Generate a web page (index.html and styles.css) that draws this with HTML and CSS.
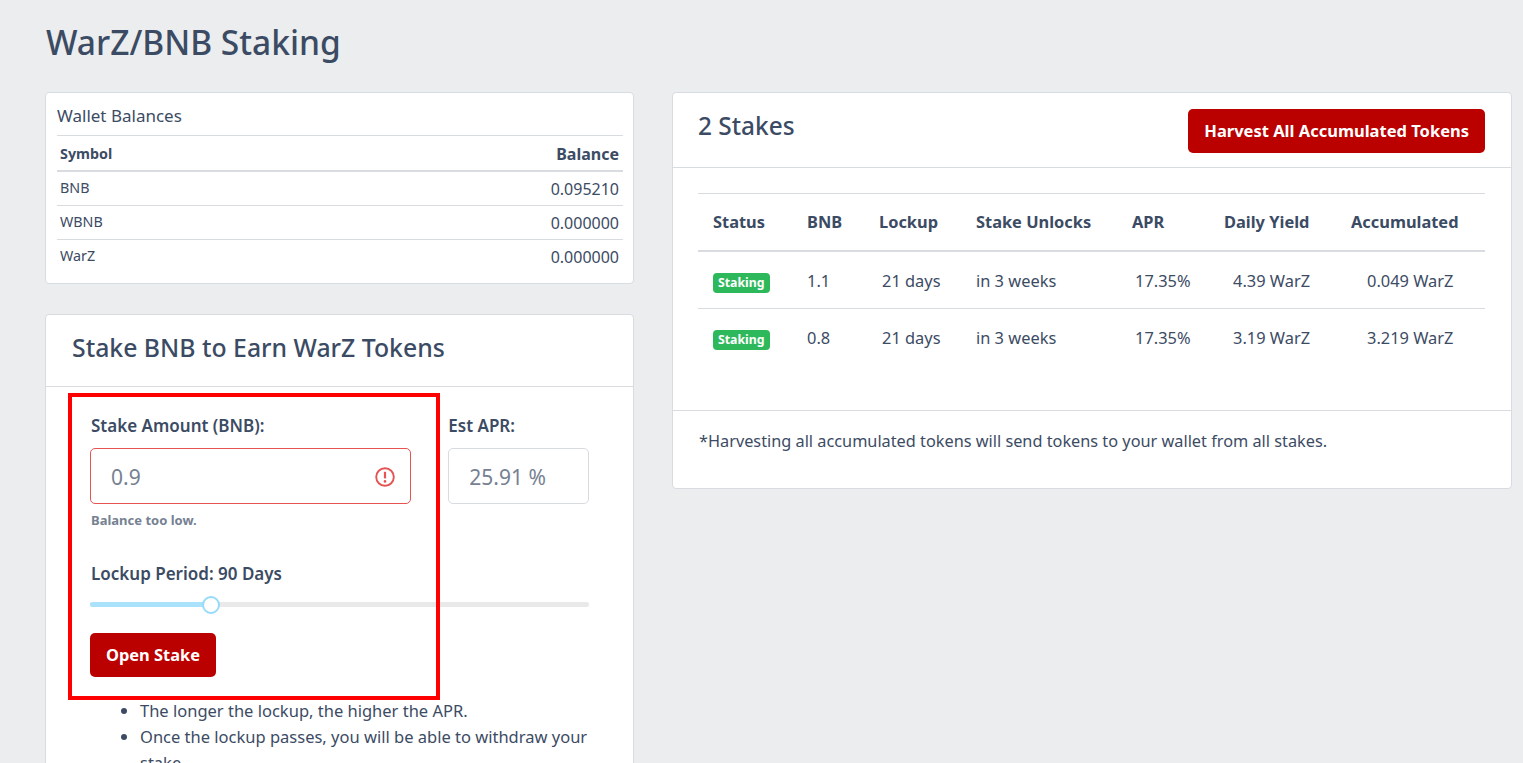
FILE: index.html
```html
<!DOCTYPE html>
<html>

<head>
    <meta charset="utf-8" />
    <title>WarZ/BNB Staking</title>
    <link rel="stylesheet" href="styles.css">
</head>

<body>
    <div class="page">
        <h1>WarZ/BNB Staking</h1>
        <div class="columns">
            <div class="left-col">
                <div class="card wallet">
                    <div class="wallet-title">Wallet Balances</div>
                    <table class="balances">
                        <thead>
                            <tr>
                                <th class="symbol">Symbol</th>
                                <th class="num">Balance</th>
                            </tr>
                        </thead>
                        <tbody>
                            <tr>
                                <td class="symbol">BNB</td>
                                <td class="num">0.095210</td>
                            </tr>
                            <tr>
                                <td class="symbol">WBNB</td>
                                <td class="num">0.000000</td>
                            </tr>
                            <tr>
                                <td class="symbol">WarZ</td>
                                <td class="num">0.000000</td>
                            </tr>
                        </tbody>
                    </table>
                </div>

                <div class="card stake-card">
                    <div class="stake-header">
                        <h2>Stake BNB to Earn WarZ Tokens</h2>
                    </div>
                    <div class="stake-body">
                        <div class="field-row">
                            <div class="field amount">
                                <label>Stake Amount (BNB):</label>
                                <div class="input invalid">
                                    <span>0.9</span>
                                    <svg width="20" height="20" viewBox="0 0 20 20" fill="none" stroke="#e55353">
                                        <circle cx="10" cy="10" r="8.8" stroke-width="1.9" />
                                        <path d="M10 4.8v6.6" stroke-width="2.2" />
                                        <circle cx="10" cy="14.4" r="1.3" fill="#e55353" stroke="none" />
                                    </svg>
                                </div>
                                <div class="hint">Balance too low.</div>
                            </div>
                            <div class="field apr">
                                <label>Est APR:</label>
                                <div class="input"><span>25.91 %</span></div>
                            </div>
                        </div>
                        <label class="lockup-label">Lockup Period: 90 Days</label>
                        <div class="slider">
                            <div class="slider-fill"></div>
                            <div class="slider-thumb"></div>
                        </div>
                        <button class="btn open-stake">Open Stake</button>
                        <ul class="notes">
                            <li>The longer the lockup, the higher the APR.</li>
                            <li>Once the lockup passes, you will be able to withdraw your stake.</li>
                        </ul>
                    </div>
                </div>
            </div>

            <div class="right-col">
                <div class="card stakes">
                    <div class="stakes-header">
                        <h2>2 Stakes</h2>
                        <button class="btn">Harvest All Accumulated Tokens</button>
                    </div>
                    <div class="stakes-body">
                        <table class="stakes-table">
                            <colgroup>
                                <col class="col-status">
                                <col class="col-bnb">
                                <col class="col-lockup">
                                <col class="col-unlocks">
                                <col class="col-apr">
                                <col class="col-yield">
                                <col class="col-acc">
                            </colgroup>
                            <thead>
                                <tr>
                                    <th>Status</th>
                                    <th>BNB</th>
                                    <th>Lockup</th>
                                    <th>Stake Unlocks</th>
                                    <th>APR</th>
                                    <th>Daily Yield</th>
                                    <th>Accumulated</th>
                                </tr>
                            </thead>
                            <tbody>
                                <tr>
                                    <td><span class="badge">Staking</span></td>
                                    <td>1.1</td>
                                    <td class="pad">21 days</td>
                                    <td>in 3 weeks</td>
                                    <td class="pad">17.35%</td>
                                    <td class="pad-lg">4.39 WarZ</td>
                                    <td class="pad-xl">0.049 WarZ</td>
                                </tr>
                                <tr>
                                    <td><span class="badge">Staking</span></td>
                                    <td>0.8</td>
                                    <td class="pad">21 days</td>
                                    <td>in 3 weeks</td>
                                    <td class="pad">17.35%</td>
                                    <td class="pad-lg">3.19 WarZ</td>
                                    <td class="pad-xl">3.219 WarZ</td>
                                </tr>
                            </tbody>
                        </table>
                    </div>
                    <div class="stakes-footer">*Harvesting all accumulated tokens will send tokens to your wallet from all stakes.</div>
                </div>
            </div>
        </div>
    </div>

    <!-- red marker drawn over the form -->
    <div class="marker"></div>
</body>

</html>
```

FILE: styles.css
```css
* {
    box-sizing: border-box;
}

html,
body {
    font-family: 'Noto Sans', 'Open Sans', sans-serif;
    font-size: 15px;
    line-height: 1.5;
    color: #3c4b64;
    background: #ebedef;
    padding: 0;
    margin: 0;
    height: 763px;
    overflow: hidden;
}

.page {
    padding: 19px 11px 0 45px;
}

h1 {
    font-size: 33.5px;
    font-weight: 500;
    line-height: 46px;
    margin: 0 0 27px 1px;
}

h2 {
    font-weight: 500;
    margin: 0;
}

.columns {
    display: grid;
    grid-template-columns: 589px 840px;
    gap: 38px;
    align-items: start;
}

.card {
    background: #fff;
    border: 1px solid #d8dbe0;
    border-radius: 4px;
}

/* wallet */
.wallet {
    height: 192px;
    padding: 11px 10px 0 11px;
    margin-bottom: 30px;
}

.wallet-title {
    font-size: 17px;
    line-height: 24px;
    height: 32px;
    border-bottom: 1px solid #d8dbe0;
}

.balances {
    width: 100%;
    border-collapse: collapse;
    font-size: 14.3px;
}

.balances th,
.balances td {
    padding: 2px 4px 0 3px;
    height: 34px;
    border-bottom: 1px solid #d8dbe0;
}

.balances th {
    height: 35px;
    border-bottom-width: 2px;
    font-weight: 700;
    text-align: left;
    font-size: 16px;
}

.balances th.symbol {
    font-size: 14.3px;
}

.balances .num {
    text-align: right;
}

.balances td.num {
    font-size: 16px;
}

.balances td.symbol {
    padding-top: 0;
    padding-bottom: 1px;
}

.balances tbody tr:last-child td {
    border-bottom: 0;
}

/* stake form */
.stake-header {
    height: 72px;
    padding: 15px 26px;
    border-bottom: 1px solid #d8dbe0;
}

.stake-header h2 {
    font-size: 24.8px;
    line-height: 34px;
}

.stake-body {
    padding: 27px 44px 0;
}

.field-row {
    display: flex;
    gap: 37px;
}

.field label,
.lockup-label {
    display: block;
    font-size: 17px;
    font-weight: 600;
    line-height: 24px;
}

.amount label,
.lockup-label,
.hint {
    padding-left: 1px;
}

.amount {
    width: 322px;
}

.apr {
    width: 141px;
}

.input {
    display: flex;
    align-items: center;
    justify-content: space-between;
    height: 56px;
    margin-top: 10px;
    padding: 2px 15px 0 20px;
    font-size: 21px;
    color: #768192;
    border: 1px solid #d8dbe0;
    border-radius: 5px;
}

.input span {
    padding-top: 2px;
}

.input.invalid {
    border-color: #e55353;
}

.hint {
    margin-top: 7px;
    font-size: 13px;
    font-weight: 700;
    line-height: 18px;
    color: #768192;
}

.lockup-label {
    margin-top: 33px;
}

.slider {
    position: relative;
    height: 5px;
    margin-top: 16px;
    border-radius: 3px;
    background: #e9e9e9;
}

.slider-fill {
    width: 121px;
    height: 5px;
    border-radius: 3px;
    background: #abe2fb;
}

.slider-thumb {
    position: absolute;
    left: 112px;
    top: -6px;
    width: 18px;
    height: 18px;
    border-radius: 50%;
    border: 2px solid #96dbfa;
    background: #fff;
}

.btn {
    font-family: inherit;
    font-size: 16.5px;
    font-weight: 700;
    line-height: 24px;
    color: #fff;
    background: #bb0000;
    border: 0;
    border-radius: 5px;
    padding: 10px 16px;
}

.open-stake {
    display: block;
    margin-top: 26px;
    font-size: 16.4px;
}

.notes {
    margin: 21px 0 0 -1px;
    padding-left: 51px;
    font-size: 16.5px;
    line-height: 26px;
}

/* stakes list */
.stakes {
    height: 397px;
}

.stakes-header {
    display: flex;
    justify-content: space-between;
    align-items: flex-start;
    height: 75px;
    padding: 16px 26px 0 25px;
    border-bottom: 1px solid #d8dbe0;
}

.stakes-header h2 {
    font-size: 24.4px;
    line-height: 34px;
}

.stakes-body {
    height: 243px;
    padding: 25px 26px 0 25px;
    border-bottom: 1px solid #d8dbe0;
}

.stakes-table {
    width: 100%;
    table-layout: fixed;
    border-collapse: collapse;
    border-top: 1px solid #d8dbe0;
    font-size: 16.4px;
}

.col-status { width: 94px; }
.col-bnb { width: 72px; }
.col-lockup { width: 97px; }
.col-unlocks { width: 156px; }
.col-apr { width: 92px; }
.col-yield { width: 127px; }
.col-acc { width: 149px; }

.stakes-table th {
    height: 57px;
    padding: 2px 0 0 15px;
    text-align: left;
    font-weight: 700;
    border-bottom: 2px solid #d8dbe0;
    white-space: nowrap;
}

.stakes-table td {
    height: 58px;
    padding: 2px 0 0 15px;
    border-bottom: 1px solid #d8dbe0;
    white-space: nowrap;
}

.stakes-table tbody tr:first-child td {
    padding-top: 4px;
}

.stakes-table tbody tr:last-child td {
    border-bottom: 0;
}

.stakes-table td.pad {
    padding-left: 18px;
}

.stakes-table td.pad-lg {
    padding-left: 24px;
}

.stakes-table td.pad-xl {
    padding-left: 31px;
}

.badge {
    display: inline-block;
    padding: 0 5px;
    height: 20px;
    line-height: 20px;
    font-size: 12.3px;
    font-weight: 700;
    color: #fff;
    background: #2eb85c;
    border-radius: 4px;
}

.stakes-footer {
    padding: 18px 26px;
    font-size: 16.3px;
    line-height: 24px;
}

.marker {
    position: absolute;
    left: 68px;
    top: 393px;
    width: 372px;
    height: 307px;
    border: 4px solid #ff0000;
}
```
